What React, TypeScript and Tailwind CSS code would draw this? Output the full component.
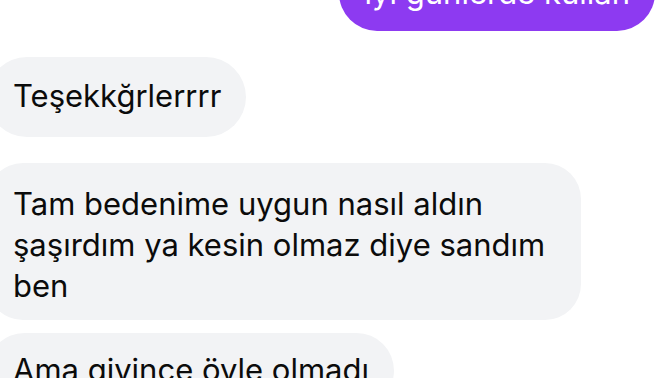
import React from "react";

export default function App() {
  return (
    <div className="w-[672px] h-[378px] overflow-hidden bg-white flex flex-col font-['Inter',sans-serif] text-[31px] leading-[41px] text-[#0b0b0b]">
      <div className="flex justify-end pr-[17px]">
        <div className="mt-[-46px] bg-[#8D3AF1] text-white rounded-[38px] pl-[26px] pr-[25px] pt-[18px] pb-[18px] whitespace-nowrap">
          iyi günlerde kullan
        </div>
      </div>
      <div className="flex mt-[26px]">
        <div className="ml-[-13px] bg-[#F2F3F5] rounded-[40px] pl-[26px] pr-[25px] pt-[18px] pb-[21px] whitespace-nowrap">
          Teşekkğrlerrrr
        </div>
      </div>
      <div className="flex mt-[26px]">
        <div className="ml-[-13px] w-[594px] bg-[#F2F3F5] rounded-[36px] pl-[26px] pr-[25px] pt-[20px] pb-[14px] whitespace-nowrap">
          Tam bedenime uygun nasıl aldın
          <br />
          şaşırdım ya kesin olmaz diye sandım
          <br />
          ben
        </div>
      </div>
      <div className="flex mt-[13px]">
        <div className="ml-[-13px] bg-[#F2F3F5] rounded-[38px] pl-[26px] pr-[25px] pt-[16px] pb-[18px] whitespace-nowrap">
          Ama giyince öyle olmadı
        </div>
      </div>
    </div>
  );
}
